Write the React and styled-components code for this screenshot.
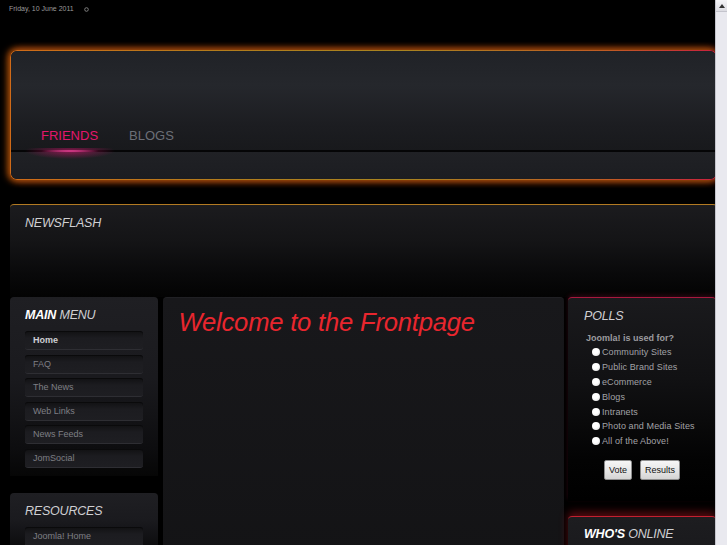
import React from 'react'
import styled, { createGlobalStyle } from 'styled-components'

const GlobalStyle = createGlobalStyle`
  html, body {
    margin: 0;
    padding: 0;
    background: #000;
    overflow: hidden;
    font-family: "Liberation Sans", Arial, sans-serif;
  }
`

const menuItems = ['Home', 'FAQ', 'The News', 'Web Links', 'News Feeds', 'JomSocial']
const pollOptions = [
  'Community Sites',
  'Public Brand Sites',
  'eCommerce',
  'Blogs',
  'Intranets',
  'Photo and Media Sites',
  'All of the Above!',
]

function App() {
  return (
    <>
      <GlobalStyle />
      <Page>
        <TopBar>
          <DateText>Friday, 10 June 2011</DateText>
          <svg width="5" height="5" viewBox="0 0 5 5">
            <circle cx="2.5" cy="2.5" r="1.8" fill="none" stroke="#8a8a8a" strokeWidth="0.9" />
          </svg>
        </TopBar>

        <Header>
          <HeaderSky>
            <NavItem $active>FRIENDS</NavItem>
            <NavItem>BLOGS</NavItem>
          </HeaderSky>
          <HeaderLine />
          <HeaderFloor />
        </Header>

        <Newsflash>
          <BoxTitle>NEWSFLASH</BoxTitle>
        </Newsflash>

        <Columns>
          <SideColumn>
            <SideBox>
              <BoxTitle><b>MAIN</b> MENU</BoxTitle>
              <Menu>
                {menuItems.map((item, i) => (
                  <MenuItem key={item} $active={i === 0}>{item}</MenuItem>
                ))}
              </Menu>
            </SideBox>
            <SideBox>
              <BoxTitle>RESOURCES</BoxTitle>
              <Menu>
                <MenuItem>Joomla! Home</MenuItem>
              </Menu>
            </SideBox>
          </SideColumn>

          <MainBox>
            <Welcome>Welcome to the Frontpage</Welcome>
          </MainBox>

          <SideColumn $gap={15}>
            <PollBox>
              <BoxTitle>POLLS</BoxTitle>
              <Question>Joomla! is used for?</Question>
              <Options>
                {pollOptions.map((opt) => (
                  <Option key={opt}>
                    <Radio type="radio" name="poll" />
                    {opt}
                  </Option>
                ))}
              </Options>
              <Buttons>
                <PollButton>Vote</PollButton>
                <PollButton>Results</PollButton>
              </Buttons>
            </PollBox>
            <OnlineBox>
              <BoxTitle><b>WHO'S</b> ONLINE</BoxTitle>
            </OnlineBox>
          </SideColumn>
        </Columns>
      </Page>
      <Scrollbar>
        <ScrollUp />
      </Scrollbar>
    </>
  )
}

export default App

const Page = styled.div`
  width: 707px;
  padding-left: 10px;
  height: 545px;
  overflow: hidden;
`

const TopBar = styled.div`
  height: 50px;
  display: flex;
  align-items: flex-start;
  gap: 10px;
  box-sizing: border-box;
  padding-top: 5px;
  margin-left: -1px;

  svg {
    margin-top: 2px;
  }
`

const DateText = styled.span`
  font-size: 7px;
  line-height: 8px;
  color: #9a9a9a;
`

const Header = styled.div`
  height: 130px;
  box-sizing: border-box;
  display: flex;
  flex-direction: column;
  border: 1px solid transparent;
  border-radius: 7px;
  background:
    linear-gradient(#17181b, #17181b) padding-box,
    linear-gradient(90deg, #d06a18 0%, #b27c1c 30%, #a88420 55%, #c05a24 85%, #c8203e 100%) border-box;
  box-shadow:
    -2px 0 7px 1px rgba(210, 90, 10, 0.55),
    0 -2px 7px 0 rgba(180, 110, 10, 0.45),
    0 2px 7px 0 rgba(180, 110, 10, 0.45),
    3px 0 7px 1px rgba(200, 30, 50, 0.5);
  margin-bottom: 24px;
`

const HeaderSky = styled.div`
  height: 99px;
  box-sizing: border-box;
  display: flex;
  align-items: flex-end;
  gap: 31px;
  padding: 0 0 8px 30px;
  border-radius: 6px 6px 0 0;
  background: linear-gradient(180deg, #202227 0%, #25272c 35%, #1c1d21 75%, #18191c 100%);
`

const NavItem = styled.div`
  position: relative;
  font-size: 13px;
  line-height: 13px;
  color: ${(p) => (p.$active ? '#e4166c' : '#6c6f77')};

  &::after {
    content: '';
    display: ${(p) => (p.$active ? 'block' : 'none')};
    position: absolute;
    left: -16px;
    width: 90px;
    top: 19px;
    height: 16px;
    background:
      radial-gradient(ellipse 30px 1.5px at 50% 3px, rgba(255, 80, 170, 0.9), transparent),
      radial-gradient(ellipse 45px 8px at 50% 3px, rgba(190, 20, 100, 0.65), transparent);
  }
`

const HeaderLine = styled.div`
  height: 2px;
  background: #050506;
`

const HeaderFloor = styled.div`
  flex: 1;
  border-radius: 0 0 6px 6px;
  background: linear-gradient(180deg, #202125 0%, #1c1d21 100%);
`

const Newsflash = styled.div`
  height: 93px;
  box-sizing: border-box;
  padding: 11px 15px 0;
  border-top: 1px solid #b27a22;
  border-radius: 4px 4px 0 0;
  background: linear-gradient(180deg, #1b1b1e 0%, #141416 40%, #09090a 75%, #030303 100%);
`

const BoxTitle = styled.h2`
  margin: 0;
  font-size: 12.5px;
  line-height: 14px;
  font-style: italic;
  font-weight: normal;
  color: #cfcfd2;
  letter-spacing: -0.2px;

  b {
    font-weight: bold;
    color: #ffffff;
  }
`

const Columns = styled.div`
  display: grid;
  grid-template-columns: 148px 401px 148px;
  column-gap: 4.5px;
  align-items: start;
`

const SideColumn = styled.div`
  display: flex;
  flex-direction: column;
  gap: ${(p) => p.$gap ?? 17}px;
`

const SideBox = styled.div`
  padding: 11px 15px 8px;
  border-radius: 4px 4px 0 0;
  background: linear-gradient(180deg, #1f1f23 0%, #1a1a1e 45%, #0d0d0f 85%, #060606 100%);
`

const Menu = styled.div`
  display: flex;
  flex-direction: column;
  gap: 4.5px;
  margin-top: 9px;
`

const MenuItem = styled.div`
  height: 19px;
  box-sizing: border-box;
  padding-left: 8px;
  display: flex;
  align-items: center;
  font-size: 9px;
  border-radius: 3px;
  color: ${(p) => (p.$active ? '#cfcfd4' : '#7e7f84')};
  font-weight: ${(p) => (p.$active ? 'bold' : 'normal')};
  background: linear-gradient(180deg, #111113 0%, #1c1c20 40%, #1e1e22 100%);
  border-bottom: 1px solid #2e2e33;
  box-shadow: inset 0 1px 0 #0a0a0b;
`

const MainBox = styled.div`
  height: 260px;
  padding: 10px 16px;
  border-radius: 4px 4px 0 0;
  border-top: 1px solid #202024;
  background: linear-gradient(180deg, #18181b 0%, #131315 100%);
`

const Welcome = styled.h1`
  margin: 0;
  font-size: 25.6px;
  line-height: 28px;
  font-style: italic;
  font-weight: normal;
  color: #e8262e;
  letter-spacing: -0.2px;
`

const PollBox = styled.div`
  padding: 11px 16px 21px;
  border-top: 1px solid #a8183e;
  border-radius: 4px 4px 0 0;
  box-shadow: 0 -2px 4px rgba(160, 20, 60, 0.25);
  background: linear-gradient(180deg, #1a1a1d 0%, #111113 40%, #030303 80%, #000 100%);
`

const Question = styled.div`
  margin: 9px 0 1px 2px;
  font-size: 9px;
  line-height: 12px;
  font-weight: bold;
  color: #9c9c9f;
`

const Options = styled.div`
  padding-left: 7px;
  display: flex;
  flex-direction: column;
`

const Option = styled.label`
  display: flex;
  align-items: center;
  height: 14.8px;
  font-size: 9px;
  color: #a2a2a6;
  letter-spacing: 0.1px;
`

const Radio = styled.input`
  appearance: none;
  width: 8px;
  height: 8px;
  margin: 0 2px 0 1px;
  border-radius: 50%;
  background: radial-gradient(circle at 40% 35%, #ffffff 40%, #d8d8d8 100%);
`

const Buttons = styled.div`
  display: flex;
  justify-content: center;
  gap: 8px;
  margin-top: 11px;
`

const PollButton = styled.button`
  height: 20px;
  padding: 0 4px;
  font-family: "Liberation Sans", Arial, sans-serif;
  font-size: 9px;
  color: #111;
  border: 1px solid #8d8d8d;
  border-radius: 2px;
  background: linear-gradient(180deg, #f6f6f6 0%, #e4e4e4 60%, #d4d4d4 100%);
`

const OnlineBox = styled.div`
  height: 40px;
  padding: 10px 16px 0;
  border-top: 1px solid #c42030;
  border-radius: 4px 4px 0 0;
  box-shadow: 0 -4px 8px rgba(190, 25, 35, 0.45);
  background: linear-gradient(180deg, #1d1d20 0%, #18181b 100%);
`

const Scrollbar = styled.div`
  position: fixed;
  top: 0;
  right: 0;
  width: 11px;
  height: 100%;
  border-left: 1px solid #c4c4cc;
  background: #e9e9ef;
`

const ScrollUp = styled.div`
  height: 11px;
  border-bottom: 1px solid #c4c4cc;
  background: linear-gradient(180deg, #f4f4f7, #dcdce2);
  display: flex;
  align-items: center;
  justify-content: center;

  &::before {
    content: '';
    border-left: 3px solid transparent;
    border-right: 3px solid transparent;
    border-bottom: 4px solid #333;
  }
`
